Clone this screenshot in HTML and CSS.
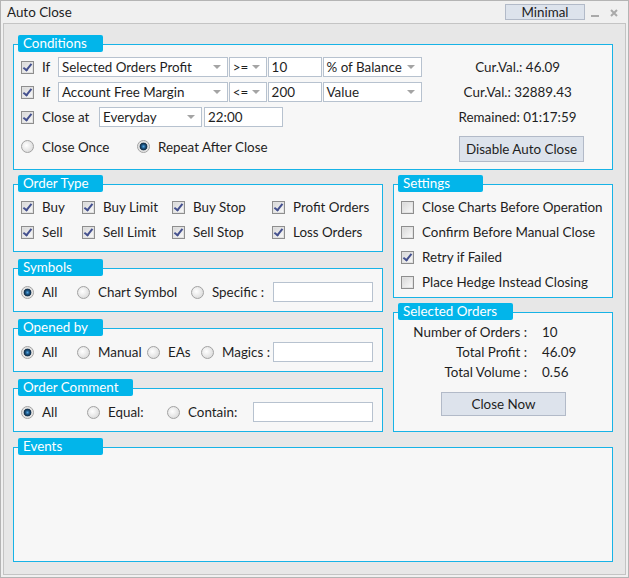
FILE: index.html
```html
<!DOCTYPE html>
<html lang="en">
<head>
  <meta charset="UTF-8">
  <title>Auto Close</title>
  <link rel="stylesheet" href="styles.css">
</head>
<body>

<div class="window">
  <!-- Title bar -->
  <div class="titlebar">
    <span class="title">Auto Close</span>
    <button class="btn btn-minimal">Minimal</button>
    <span class="tb-min"></span>
    <svg class="tb-close" width="8" height="8" viewBox="0 0 8 8"><path d="M1 1 L7 7 M7 1 L1 7" stroke="#a9a9a9" stroke-width="2"/></svg>
  </div>

  <div class="panel">
    <!-- Conditions -->
    <section class="group">
      <div class="tab">Conditions</div>
      <div class="box box-conditions">
        <div class="crow">
          <span class="cb on"></span>
          <span class="lbl lbl-if">If</span>
          <span class="combo w-170">Selected Orders Profit</span>
          <span class="combo w-38">&gt;=</span>
          <span class="edit w-54">10</span>
          <span class="combo w-100">% of Balance</span>
          <span class="info">Cur.Val.: 46.09</span>
        </div>
        <div class="crow">
          <span class="cb on"></span>
          <span class="lbl lbl-if">If</span>
          <span class="combo w-170">Account Free Margin</span>
          <span class="combo w-38">&lt;=</span>
          <span class="edit w-54">200</span>
          <span class="combo w-100">Value</span>
          <span class="info">Cur.Val.: 32889.43</span>
        </div>
        <div class="crow">
          <span class="cb on"></span>
          <span class="lbl lbl-at">Close at</span>
          <span class="combo w-103">Everyday</span>
          <span class="edit w-79">22:00</span>
          <span class="info">Remained: 01:17:59</span>
        </div>
        <div class="crow crow-last">
          <div class="radios">
            <label class="opt opt-once"><span class="rb"></span>Close Once</label>
            <label class="opt"><span class="rb on"></span>Repeat After Close</label>
          </div>
          <div class="info info-btn">
            <button class="btn btn-disable">Disable Auto Close</button>
          </div>
        </div>
      </div>
    </section>

    <div class="columns">
      <div class="col">
        <section class="group">
          <div class="tab">Order Type</div>
          <div class="box box-types">
            <label class="opt"><span class="cb on"></span>Buy</label>
            <label class="opt"><span class="cb on"></span>Buy Limit</label>
            <label class="opt"><span class="cb on"></span>Buy Stop</label>
            <label class="opt"><span class="cb on"></span>Profit Orders</label>
            <label class="opt"><span class="cb on"></span>Sell</label>
            <label class="opt"><span class="cb on"></span>Sell Limit</label>
            <label class="opt"><span class="cb on"></span>Sell Stop</label>
            <label class="opt"><span class="cb on"></span>Loss Orders</label>
          </div>
        </section>

        <section class="group gap-7">
          <div class="tab">Symbols</div>
          <div class="box box-line line-symbols">
            <label class="opt"><span class="rb on"></span>All</label>
            <label class="opt"><span class="rb"></span>Chart Symbol</label>
            <label class="opt"><span class="rb"></span>Specific :</label>
            <span class="edit"></span>
          </div>
        </section>

        <section class="group gap-7">
          <div class="tab">Opened by</div>
          <div class="box box-line line-opened">
            <label class="opt"><span class="rb on"></span>All</label>
            <label class="opt"><span class="rb"></span>Manual</label>
            <label class="opt"><span class="rb"></span>EAs</label>
            <label class="opt"><span class="rb"></span>Magics :</label>
            <span class="edit"></span>
          </div>
        </section>

        <section class="group gap-7">
          <div class="tab tab-wide">Order Comment</div>
          <div class="box box-line line-comment">
            <label class="opt"><span class="rb on"></span>All</label>
            <label class="opt"><span class="rb"></span>Equal:</label>
            <label class="opt"><span class="rb"></span>Contain:</label>
            <span class="edit"></span>
          </div>
        </section>
      </div>

      <div class="col">
        <section class="group">
          <div class="tab">Settings</div>
          <div class="box box-settings">
            <label class="opt"><span class="cb"></span>Close Charts Before Operation</label>
            <label class="opt"><span class="cb"></span>Confirm Before Manual Close</label>
            <label class="opt"><span class="cb on"></span>Retry if Failed</label>
            <label class="opt"><span class="cb"></span>Place Hedge Instead Closing</label>
          </div>
        </section>

        <section class="group gap-5">
          <div class="tab tab-wide">Selected Orders</div>
          <div class="box box-selected">
            <div class="stats">
              <span class="stat-label">Number of Orders :</span><span>10</span>
              <span class="stat-label">Total Profit :</span><span>46.09</span>
              <span class="stat-label">Total Volume :</span><span>0.56</span>
            </div>
            <button class="btn btn-close-now">Close Now</button>
          </div>
        </section>
      </div>
    </div>

    <!-- Events log -->
    <section class="group gap-6">
      <div class="tab">Events</div>
      <div class="box box-events"></div>
    </section>
  </div>
</div>

</body>
</html>
```

FILE: styles.css
```css
* {
  box-sizing: border-box;
}

body {
  margin: 0;
  font-family: 'Lato', 'Open Sans', sans-serif;
  font-size: 13.4px;
  color: #1e1e1e;
  background-color: #f0f0f0;
}

.window {
  width: 629px;
  height: 578px;
  border: 1px solid #b4b4b4;
  background-color: #f0f0f0;
  padding: 0 2px 2px 2px;
  display: flex;
  flex-direction: column;
}

/* Title bar */
.titlebar {
  height: 22px;
  display: flex;
  align-items: center;
  padding-left: 4px;
}

.title {
  flex: 1;
}

.btn {
  font-family: inherit;
  font-size: 13.4px;
  color: #1e1e1e;
  background-color: #dde3ec;
  border: 1px solid #b2bac8;
  padding: 0;
  cursor: pointer;
}

.btn-minimal {
  width: 80px;
  height: 16px;
  line-height: 14px;
}

.tb-min {
  width: 8px;
  height: 2px;
  background-color: #a9a9a9;
  margin: 7px 11px 0 6px;
}

.tb-close {
  margin: 2px 8px 0 0;
}

/* Main panel */
.panel {
  flex: 1;
  border: 1px solid #c4c4c4;
  background-color: #e7e7e7;
  padding: 11px 0 0 9px;
}

.columns {
  display: grid;
  grid-template-columns: 370px 220px;
  column-gap: 10px;
  margin-top: 5px;
}

.group {
  display: flex;
  flex-direction: column;
}

.gap-5 { margin-top: 5px; }
.gap-6 { margin-top: 6px; }
.gap-7 { margin-top: 7px; }

.tab {
  position: relative;
  z-index: 1;
  width: 85px;
  height: 17px;
  margin-left: 5px;
  padding-left: 5px;
  line-height: 17px;
  color: white;
  background-color: #02b5ea;
  border-radius: 2px;
}

.tab-wide {
  width: 115px;
}

.box {
  margin-top: -8px;
  border: 1px solid #17b3e6;
  background-color: #f7f7f7;
}

/* Conditions */
.box-conditions {
  width: 600px;
  height: 126px;
  padding: 12px 0 0 7px;
}

.crow {
  display: flex;
  align-items: center;
  height: 20px;
  margin-bottom: 5px;
}

.crow-last {
  height: 26px;
  margin-top: 9px;
  align-items: flex-start;
}

.lbl-if { width: 16px; }
.lbl-at { width: 57px; }

.combo, .edit {
  position: relative;
  display: block;
  height: 20px;
  line-height: 18px;
  padding-left: 3px;
  background-color: white;
  border: 1px solid #b7c2cf;
  white-space: nowrap;
  margin-right: 1px;
}

/* drop-down arrow */
.combo::after {
  content: '';
  position: absolute;
  right: 6px;
  top: 7px;
  border-left: 4px solid transparent;
  border-right: 4px solid transparent;
  border-top: 4px solid #a4a4a4;
}

.w-170 { width: 170px; }
.w-38 { width: 38px; }
.w-54 { width: 54px; }
.w-100 { width: 100px; }
.w-103 { width: 103px; margin-right: 2px; }
.w-79 { width: 79px; }

.info {
  margin-left: auto;
  width: 189px;
  text-align: center;
}

.info-btn {
  padding-left: 8px;
}

.radios {
  display: flex;
  margin-top: 4px;
  height: 13px;
  align-items: center;
}

.opt-once {
  width: 116px;
}

.btn-disable {
  width: 125px;
  height: 26px;
}

/* Check boxes and radio buttons */
.opt {
  display: flex;
  align-items: center;
  height: 20px;
  white-space: nowrap;
}

.cb, .rb {
  position: relative;
  flex: none;
  width: 13px;
  height: 13px;
  margin-right: 8px;
}

.cb {
  border: 1px solid #8e8e8e;
  box-shadow: inset 0 0 0 1px #e2e2e2;
  background: linear-gradient(135deg, #d6d6d6, #fbfbfb);
}

.cb.on::after {
  content: '';
  position: absolute;
  left: 3px;
  top: 0px;
  width: 3px;
  height: 7px;
  border-right: 2px solid #44508e;
  border-bottom: 2px solid #44508e;
  transform: rotate(38deg);
}

.rb {
  border-radius: 50%;
  border: 1px solid #a2a2a2;
  background: radial-gradient(circle at 40% 40%, #ffffff, #d2d2d2);
}

.rb.on {
  background: radial-gradient(circle at 50% 50%, #54a6e4 0, #1d5480 2px, #0e2b45 3.5px, #d8d8d8 4.2px, #f4f4f4 6px);
}

/* Order type */
.box-types {
  height: 68px;
  padding: 12px 0 0 7px;
  display: grid;
  grid-template-columns: 61px 90px 100px auto;
  grid-auto-rows: 20px;
  row-gap: 5px;
  align-content: start;
}

/* One-line radio groups */
.box-line {
  height: 44px;
  padding: 13px 0 0 7px;
  display: grid;
  grid-template-rows: 20px;
  align-content: start;
  align-items: center;
}

.box-line .edit {
  margin: 0;
}

.line-symbols { grid-template-columns: 56px 114px 82px 100px; }
.line-opened { grid-template-columns: 56px 70px 54px 72px 100px; }
.line-comment { grid-template-columns: 66px 80px 86px 120px; }

/* Settings */
.box-settings {
  height: 114px;
  padding: 12px 0 0 7px;
  display: flex;
  flex-direction: column;
  gap: 5px;
}

/* Selected orders */
.box-selected {
  height: 120px;
  padding-top: 9px;
}

.stats {
  display: grid;
  grid-template-columns: 133px auto;
  column-gap: 15px;
  grid-auto-rows: 20px;
  align-items: center;
}

.stat-label {
  text-align: right;
}

.btn-close-now {
  display: block;
  width: 125px;
  height: 24px;
  margin: 10px 0 0 47px;
}

/* Events */
.box-events {
  width: 600px;
  height: 115px;
}
```
